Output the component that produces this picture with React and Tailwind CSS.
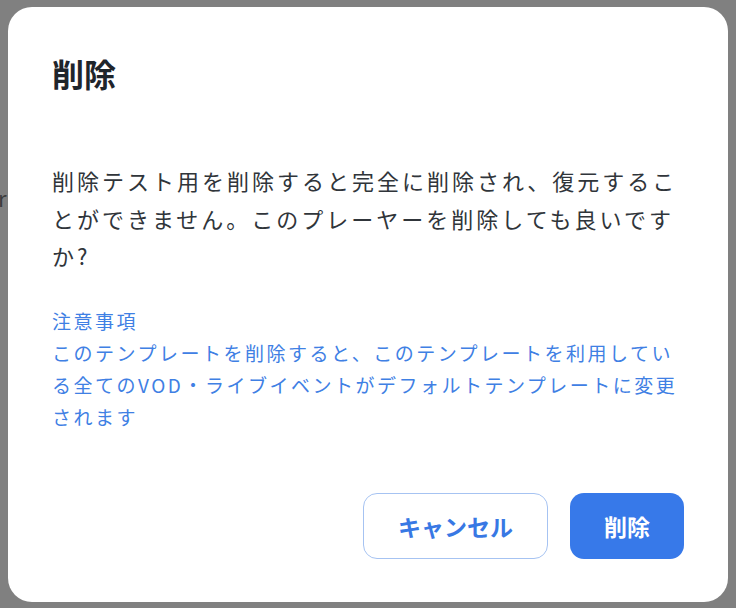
export default function App() {
  return (
    <div className="relative h-[608px] w-[736px] overflow-hidden bg-[#808080] pt-[7px] pl-[8px] font-['Noto_Sans_CJK_JP','Noto_Sans',sans-serif]">
      {/* page text showing behind the overlay */}
      <span className="absolute left-[-2px] top-[183px] text-[22px] leading-[28px] text-[#3c3c3c]">r</span>

      <div className="relative flex h-[595px] w-[720px] flex-col rounded-[24px] bg-white px-[44px] pt-[44px]">
        <h2 className="text-[32px] font-bold leading-[44px] text-[#1f252b]">削除</h2>

        <p className="mt-[67px] text-[22px] leading-[37.5px] tracking-[3px] text-[#30353a]">
          削除テスト用を削除すると完全に削除され、復元することができません。このプレーヤーを削除しても良いですか?
        </p>

        <div className="mt-[30px] text-[19px] leading-[32px] tracking-[2.5px] text-[#3f80e4]">
          <p>注意事項</p>
          <p>このテンプレートを削除すると、このテンプレートを利用している全てのVOD・ライブイベントがデフォルトテンプレートに変更されます</p>
        </div>

        <div className="mt-auto mb-[43px] flex justify-end gap-[22px]">
          <button className="h-[66px] w-[185px] rounded-[14px] border border-[#a6c3f2] bg-white text-[23px] font-bold text-[#3878e4]">
            キャンセル
          </button>
          <button className="h-[66px] w-[114px] rounded-[14px] bg-[#3779e9] text-[23px] font-bold text-white">
            削除
          </button>
        </div>
      </div>
    </div>
  );
}
